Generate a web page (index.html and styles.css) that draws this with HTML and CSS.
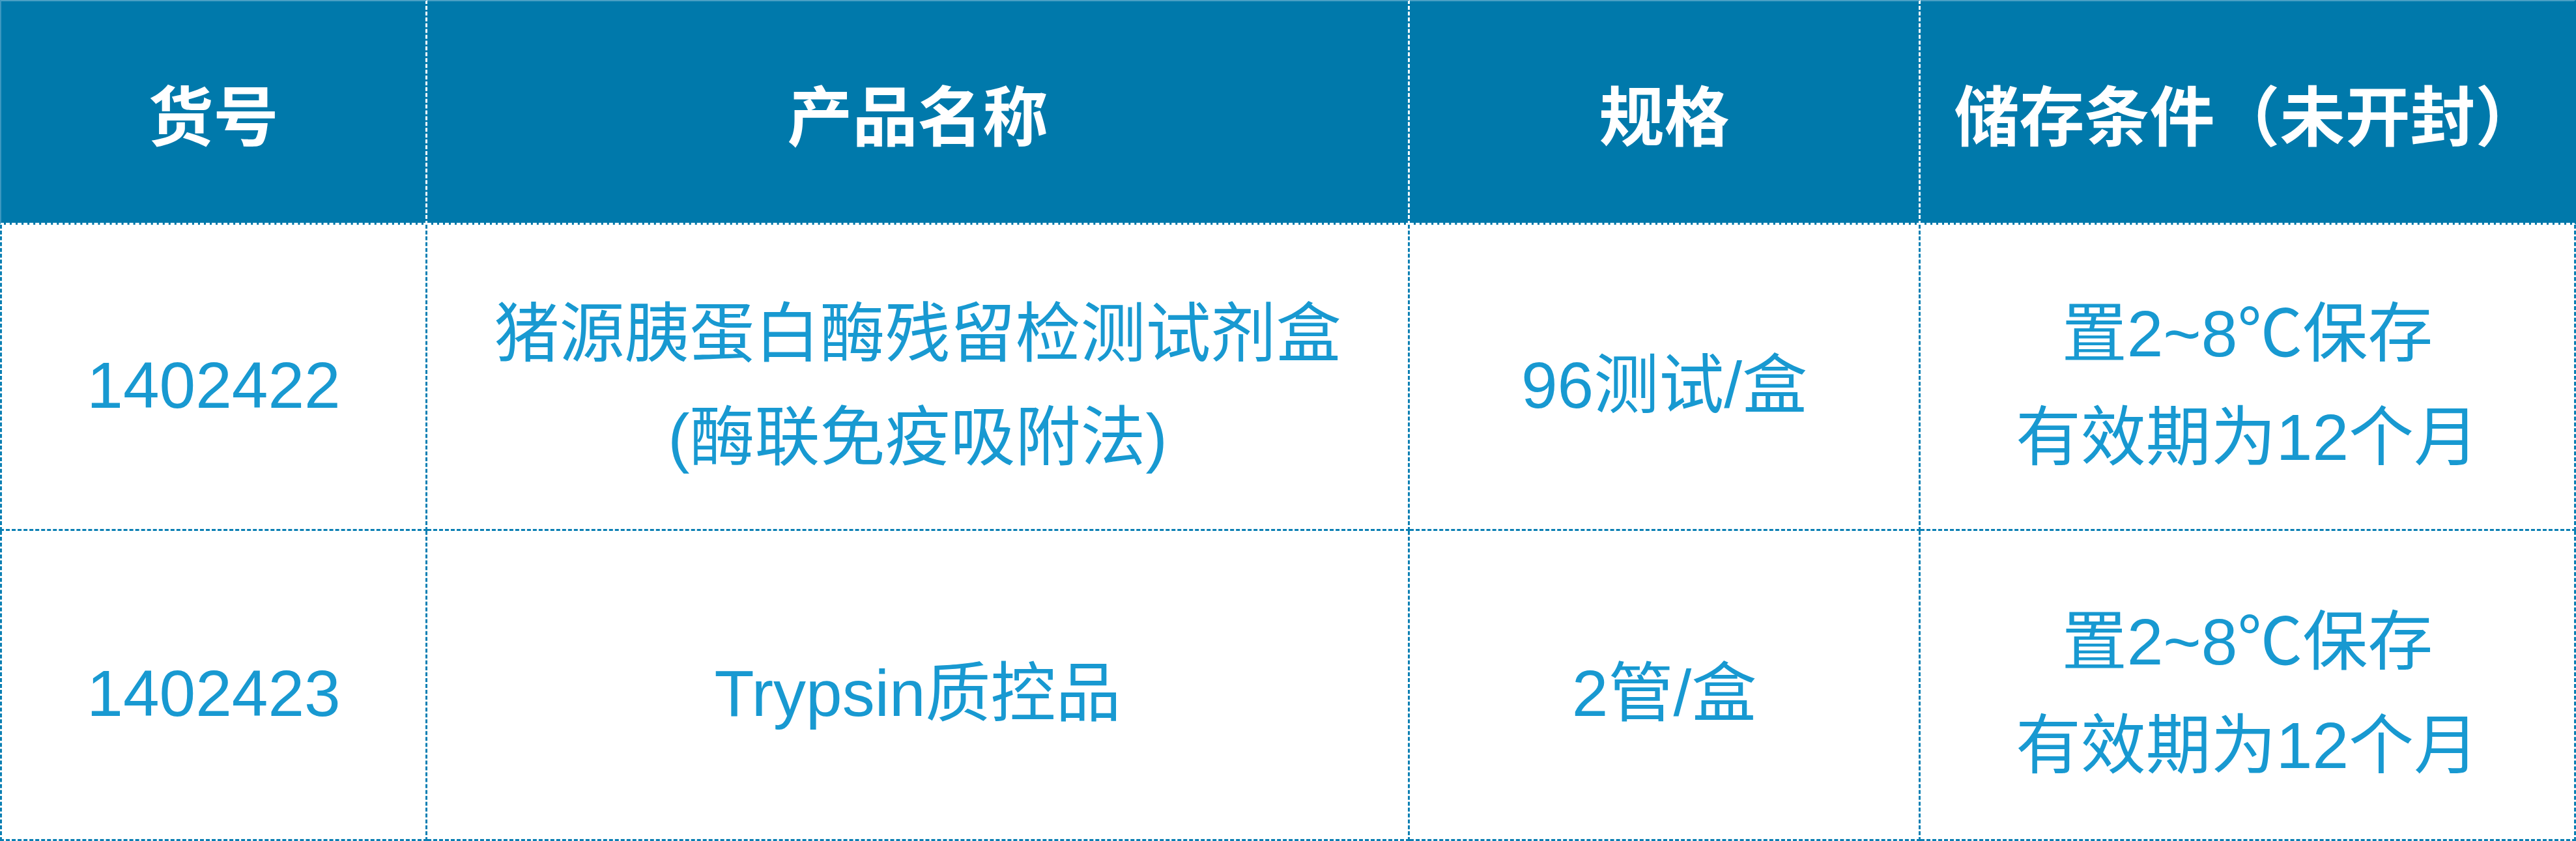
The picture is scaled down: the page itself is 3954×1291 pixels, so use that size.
FILE: index.html
```html
<!DOCTYPE html>
<html lang="zh-CN">
<head>
<meta charset="utf-8">
<title>产品信息</title>
<link rel="stylesheet" href="styles.css">
</head>
<body>
<div class="table">
  <div class="cell head first">货号</div>
  <div class="cell head">产品名称</div>
  <div class="cell head">规格</div>
  <div class="cell head last">储存条件（未开封）</div>

  <div class="cell body first">1402422</div>
  <div class="cell body">猪源胰蛋白酶残留检测试剂盒<br>(酶联免疫吸附法)</div>
  <div class="cell body">96测试/盒</div>
  <div class="cell body">置2~8℃保存<br>有效期为12个月</div>

  <div class="cell body first">1402423</div>
  <div class="cell body">Trypsin质控品</div>
  <div class="cell body">2管/盒</div>
  <div class="cell body">置2~8℃保存<br>有效期为12个月</div>
</div>
</body>
</html>
```
FILE: styles.css
```css
html, body {
  margin: 0;
  padding: 0;
  background: #ffffff;
}

.table {
  display: grid;
  grid-template-columns: 656px 1508px 784px 1006px;
  grid-template-rows: 345px 470px 476px;
  width: 3954px;
}

.cell {
  box-sizing: border-box;
  display: flex;
  align-items: center;
  justify-content: center;
  text-align: center;
  font-size: 100px;
  line-height: 159px;
}

.head {
  background: #0079ab;
  color: #ffffff;
  font-family: "Noto Sans CJK SC", "Noto Sans", sans-serif;
  font-weight: 700;
  border-top: 2px solid #4a9fc4;
  border-right: 3px dashed #ffffff;
  border-bottom: 3px dashed #ffffff;
}

.head.first {
  border-left: 2px solid #3c97bf;
}

.head.last {
  border-right: 3px solid #0079ab;
}

.body {
  color: #1899d1;
  font-family: "Liberation Sans", "Noto Sans CJK SC", sans-serif;
  font-weight: 400;
  border-right: 3px dashed #0a7fb3;
  border-bottom: 3px dashed #0a7fb3;
  padding-top: 26px;
}

.body.first {
  border-left: 3px dashed #0a7fb3;
}
```
